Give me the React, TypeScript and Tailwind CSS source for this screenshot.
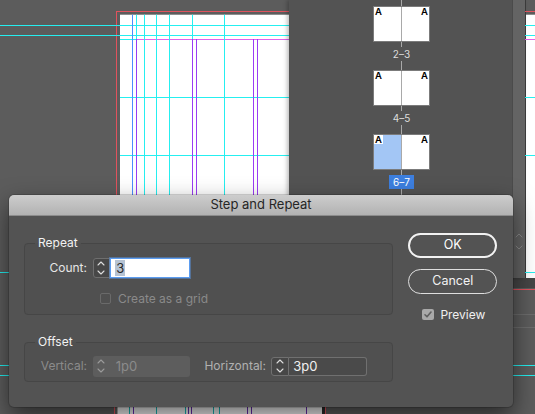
import React from "react";

function Chevrons({ color }: { color: string }) {
  return (
    <svg width="8" height="16" viewBox="0 0 8 16" fill="none" stroke={color} strokeWidth="1.1" strokeLinecap="round" strokeLinejoin="round">
      <path d="M1 5 L4 2 L7 5" />
      <path d="M1 11 L4 14 L7 11" />
    </svg>
  );
}

// pasteboard with the document spreads and their guides
function Pasteboard() {
  const cyan = "#25eff0";
  const purple = "#9a3cf4";
  const red = "#e1525d";
  return (
    <svg className="absolute inset-0" width="535" height="414" viewBox="0 0 535 414">
      <rect width="535" height="414" fill="#5c5c5c" />
      {/* upper spread */}
      <rect x="120" y="14.7" width="170" height="264" fill="#ffffff" />
      <rect x="526" y="14.7" width="9" height="264" fill="#ffffff" />
      <rect x="525" y="0" width="1" height="279" fill="#3c3c3c" />
      <rect x="289" y="278" width="246" height="10" fill="#454545" />
      <line x1="116" y1="11.5" x2="535" y2="11.5" stroke={red} />
      <line x1="116.5" y1="11" x2="116.5" y2="290" stroke={red} />
      <line x1="116" y1="289.5" x2="535" y2="289.5" stroke={red} />
      <line x1="0" y1="25.5" x2="535" y2="25.5" stroke={cyan} />
      <line x1="0" y1="35.5" x2="535" y2="35.5" stroke={cyan} />
      <line x1="120" y1="39.5" x2="136" y2="39.5" stroke={cyan} />
      <line x1="136" y1="39.5" x2="535" y2="39.5" stroke="#e062ea" />
      <line x1="120" y1="97.5" x2="535" y2="97.5" stroke={cyan} />
      <line x1="120" y1="155.5" x2="535" y2="155.5" stroke={cyan} />
      <line x1="0" y1="272.5" x2="535" y2="272.5" stroke={cyan} />
      <line x1="132.5" y1="14.7" x2="132.5" y2="278" stroke="#4e8cff" />
      <line x1="136.5" y1="14.7" x2="136.5" y2="39" stroke={cyan} />
      <line x1="136.5" y1="39" x2="136.5" y2="278" stroke={purple} />
      <line x1="144.5" y1="14.7" x2="144.5" y2="278" stroke={cyan} />
      <line x1="156.5" y1="14.7" x2="156.5" y2="278" stroke={cyan} />
      <line x1="169.5" y1="14.7" x2="169.5" y2="278" stroke={cyan} />
      <line x1="192.5" y1="14.7" x2="192.5" y2="39" stroke={cyan} />
      <line x1="192.5" y1="39" x2="192.5" y2="278" stroke={purple} />
      <line x1="196.5" y1="39" x2="196.5" y2="278" stroke={purple} />
      <line x1="224.5" y1="14.7" x2="224.5" y2="278" stroke={cyan} />
      <line x1="253.5" y1="39" x2="253.5" y2="278" stroke={purple} />
      <line x1="257.5" y1="39" x2="257.5" y2="278" stroke={purple} />
      <line x1="500" y1="314.5" x2="535" y2="314.5" stroke="#6c6c6c" />
      <line x1="500" y1="327.5" x2="535" y2="327.5" stroke="#6c6c6c" />
      {/* lower spread */}
      <line x1="0" y1="365.5" x2="535" y2="365.5" stroke={cyan} />
      <line x1="0" y1="375.5" x2="535" y2="375.5" stroke={cyan} />
      <rect x="117.5" y="380" width="205" height="34" fill="#f4f4f4" />
      <rect x="322" y="380" width="3" height="34" fill="#2a2a2a" />
      <line x1="114.5" y1="380" x2="114.5" y2="414" stroke={red} />
      <line x1="325.5" y1="380" x2="325.5" y2="414" stroke={red} />
      {[129.5, 156.5, 185.5, 213.5, 219.5].map((x) => (
        <line key={x} x1={x} y1="380" x2={x} y2="414" stroke="#19b8b8" />
      ))}
      {[133.5, 188.5, 191.5, 247.5, 251.5, 306.5].map((x) => (
        <line key={x} x1={x} y1="380" x2={x} y2="414" stroke="#6a2db0" />
      ))}
    </svg>
  );
}

function Thumb({ selected }: { selected?: boolean }) {
  return (
    <div className="relative flex h-[36px] w-[57px] border border-[#7b7b7b] bg-white">
      <div className={selected ? "w-[27px] bg-[#a3c6f5]" : "w-[27px]"} />
      <div className="w-px bg-[#a9a9a9]" />
      <div className="w-[27px]" />
      <span className="absolute left-0 top-0 bg-white px-[1px] text-[9.5px] font-semibold leading-[9px] text-black">A</span>
      <span className="absolute right-[1px] top-0 text-[9.5px] font-semibold leading-[9px] text-black">A</span>
    </div>
  );
}

function PagesPanel() {
  return (
    <div className="absolute left-[289px] top-0 flex h-[278px] w-[236px] bg-[#535353] shadow-[-2px_0_4px_rgba(0,0,0,0.25)]">
      <div className="relative flex w-[223px] flex-col items-center pl-[2px] pt-[6px]">
        <div className="absolute bottom-0 left-[112px] top-0 w-px bg-[#a9a9a9]" />
        <Thumb />
        <span className="relative mt-[5px] h-[14px] bg-[#535353] px-[4px] text-[10px] leading-[14px] text-[#dcdcdc]">2–3</span>
        <div className="relative mt-[9px]">
          <Thumb />
        </div>
        <span className="relative mt-[5px] h-[14px] bg-[#535353] px-[4px] text-[10px] leading-[14px] text-[#dcdcdc]">4–5</span>
        <div className="relative mt-[9px]">
          <Thumb selected />
        </div>
        <span className="relative mt-[5px] h-[14px] bg-[#3d7fdf] px-[4px] text-[10px] leading-[14px] text-white">6–7</span>
      </div>
      <div className="flex w-[13px] flex-col items-center justify-end border-l border-[#4b4b4b] bg-[#646464] pb-[27px]">
        <svg width="8" height="20" viewBox="0 0 8 20" fill="none" stroke="#8a8a8a" strokeWidth="1" strokeLinecap="round">
          <path d="M1 6 L4 3 L7 6" />
          <path d="M1 15 L4 18 L7 15" />
        </svg>
      </div>
    </div>
  );
}

function StepAndRepeat() {
  return (
    <div className="absolute left-[9px] top-[195px] flex h-[212px] w-[504px] flex-col overflow-hidden rounded-[5px] bg-[#535353] shadow-[0_10px_25px_rgba(0,0,0,0.55),0_0_0_1px_rgba(0,0,0,0.15)]">
      <div className="flex h-[21px] items-center justify-center border-b border-[#8c8c8c] bg-linear-to-b from-[#cdcdcd] to-[#b2b2b2] text-[13px] text-[#262626]">
        Step and Repeat
      </div>

      <div className="flex px-[15px]">
        <div className="flex w-[369px] flex-col pt-[20px]">
          <fieldset className="rounded-[4px] border border-[#464646] bg-[#505050] pb-[10px]">
            <legend className="ml-[10px] px-[3px] text-[12px] leading-[14px] text-[#f2f2f2]">Repeat</legend>
            <div className="mt-[8px] flex h-[20px] items-center">
              <span className="w-[62px] text-right text-[12px] text-[#e6e6e6]">Count:</span>
              <div className="ml-[5.7px] flex h-[20px] w-[17.5px] items-center justify-center rounded-l-[3px] border border-[#6e6e6e] bg-[#474747]">
                <Chevrons color="#dddddd" />
              </div>
              <div className="flex h-[20px] w-[80px] items-center border border-[#5b9cf0] bg-white pl-[4px] shadow-[0_0_0_1px_rgba(91,156,240,0.45)]">
                <span className="bg-[#b6c3d3] px-[1px] text-[13px] leading-[16px] text-[#2a2a2a]">3</span>
              </div>
            </div>
            <div className="mt-[15px] flex h-[11px] items-center pl-[75px]">
              <div className="h-[11px] w-[11px] rounded-[2px] border border-[#6a6a6a]" />
              <span className="ml-[7px] text-[12px] leading-none text-[#8a8a8a]">Create as a grid</span>
            </div>
          </fieldset>

          <fieldset className="mt-[20px] rounded-[4px] border border-[#464646] bg-[#505050] pb-[4.5px]">
            <legend className="ml-[10px] px-[3px] text-[12px] leading-[14px] text-[#f2f2f2]">Offset</legend>
            <div className="mt-[7px] flex h-[20.5px] items-center">
              <span className="w-[62px] text-right text-[12px] text-[#8b8b8b]">Vertical:</span>
              <div className="ml-[5.7px] flex h-[20.5px] w-[97.3px] items-center rounded-[3px] bg-[#5d5d5d]">
                <div className="flex w-[17.5px] justify-center">
                  <Chevrons color="#9a9a9a" />
                </div>
                <span className="pl-[5.5px] text-[13px] text-[#8b8b8b]">1p0</span>
              </div>
              <span className="ml-[10px] w-[66px] text-right text-[12px] text-[#b0b0b0]">Horizontal:</span>
              <div className="ml-[4.7px] flex h-[19.5px] w-[18px] items-center justify-center rounded-l-[3px] border border-[#707070] bg-[#474747]">
                <Chevrons color="#dddddd" />
              </div>
              <div className="flex h-[19.5px] w-[78.6px] items-center rounded-r-[3px] border border-l-0 border-[#707070] bg-[#4a4a4a] pl-[4.6px]">
                <span className="text-[13px] text-[#f0f0f0]">3p0</span>
              </div>
            </div>
          </fieldset>
        </div>

        <div className="ml-[15.3px] flex w-[89px] flex-col pt-[16.7px]">
          <button className="h-[25px] rounded-full border-2 border-[#f2f2f2] text-[12.5px] text-white">OK</button>
          <button className="mt-[11px] h-[25px] rounded-full border border-[#dedede] text-[12.5px] text-[#f2f2f2]">Cancel</button>
          <div className="mt-[15.6px] flex h-[11px] items-center pl-[14px]">
            <div className="flex h-[11px] w-[11.4px] items-center justify-center rounded-[2px] bg-[#a9a9a9]">
              <svg width="8" height="7" viewBox="0 0 8 7" fill="none" stroke="#606060" strokeWidth="1.6" strokeLinecap="round" strokeLinejoin="round">
                <path d="M1 3.8 L3 5.8 L7 1" />
              </svg>
            </div>
            <span className="ml-[6.7px] text-[12px] leading-none text-[#f0f0f0]">Preview</span>
          </div>
        </div>
      </div>
    </div>
  );
}

export default function App() {
  return (
    <div className="relative h-[414px] w-[535px] overflow-hidden font-[Inter,'Liberation_Sans',sans-serif]">
      <Pasteboard />
      <PagesPanel />
      <StepAndRepeat />
    </div>
  );
}
